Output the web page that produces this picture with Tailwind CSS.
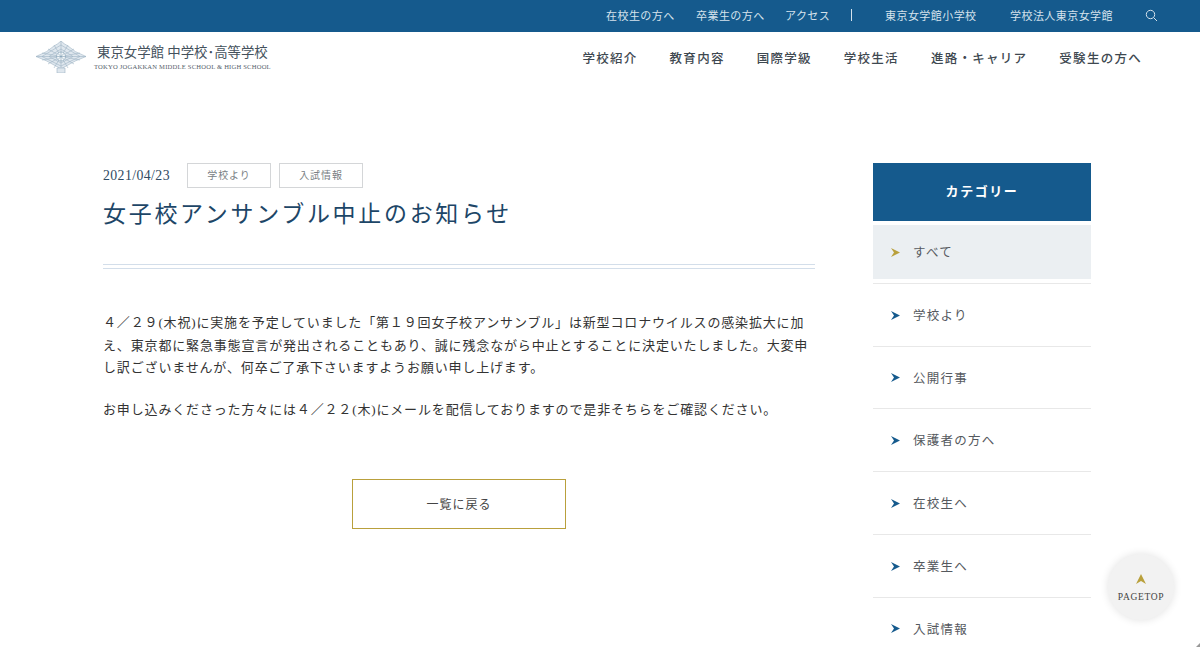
<!DOCTYPE html>
<html lang="ja">
<head>
    <meta charset="UTF-8">
    <title>女子校アンサンブル中止のお知らせ | 東京女学館</title>
    <script src="https://cdn.jsdelivr.net/npm/@tailwindcss/browser@4"></script>
</head>
<body class="bg-white">
<div class="relative h-[647px] overflow-hidden font-['Liberation_Serif','Noto_Sans_CJK_JP',serif]">
    <!-- Top bar -->
    <div class="h-[32px] bg-[#155a8d] flex items-center text-[11px] tracking-[0.04em] text-[#d5e2ec]">
        <a class="ml-[606px] w-[90px]">在校生の方へ</a>
        <a class="w-[89px]">卒業生の方へ</a>
        <a class="w-[66px]">アクセス</a>
        <span class="w-px h-[12px] bg-[#d5e2ec] mb-[2px]"></span>
        <a class="ml-[33px] w-[125px]">東京女学館小学校</a>
        <a class="w-[135px]">学校法人東京女学館</a>
        <svg class="w-[13px] h-[13px] -mt-[2px]" viewBox="0 0 13 13" fill="none" stroke="#d5e2ec" stroke-width="1"><circle cx="5.5" cy="5.5" r="4.2"/><path d="M8.6 8.6L12 12"/></svg>
    </div>

    <!-- Header -->
    <header class="h-[52px] flex items-center">
        <div class="ml-[36px] flex items-center">
            <svg class="w-[50px] h-[32px] mt-[-2px]" viewBox="0 0 50 32" fill="none" stroke="#9db4c5" stroke-width="0.6">
                <path d="M0 15.5Q12 11 18 5Q22 3 25 0Q28 3 32 5Q38 11 50 15.5Q38 20 32 24Q28 26 25 28Q22 26 18 24Q12 20 0 15.5Z" fill="#dfe7ee"/>
                <path d="M6 15.5L25 4L44 15.5L25 25Z"/>
                <path d="M13 15.5L25 8L37 15.5L25 22Z"/>
                <path d="M0 15.5H50M25 0V32M12 8L38 23M38 8L12 23M6 12L44 19M44 12L6 19M18 4L32 27M32 4L18 27"/>
                <circle cx="25" cy="15.5" r="4.5" fill="#f4f7f9" stroke="#7f9db3"/>
                <path d="M20.5 15.5H29.5M25 11V20M22 12.5L28 18.5M28 12.5L22 18.5" stroke="#7f9db3"/>
                <path d="M21 27H29V32H21Z" fill="#dfe7ee"/>
            </svg>
            <div class="ml-[8px] -mt-[3px]">
                <p class="ml-[3px] text-[13.4px] leading-[20px] text-[#44515c] whitespace-nowrap">東京女学館 中学校･高等学校</p>
                <p class="text-[6.6px] leading-[8px] tracking-[0.03em] text-[#55606a] whitespace-nowrap">TOKYO JOGAKKAN MIDDLE SCHOOL &amp; HIGH SCHOOL</p>
            </div>
        </div>
        <nav class="ml-auto mr-[58px] pt-[3px] flex items-center gap-[32px] text-[12.5px] font-medium tracking-[0.102em] text-[#3e4850] whitespace-nowrap">
            <a>学校紹介</a>
            <a>教育内容</a>
            <a>国際学級</a>
            <a>学校生活</a>
            <a>進路・キャリア</a>
            <a>受験生の方へ</a>
        </nav>
    </header>

    <!-- Main -->
    <main class="pt-[79px] pl-[103px] flex items-start">
        <article class="w-[712px]">
            <div class="flex items-center h-[25px]">
                <span class="w-[84px] pt-[2px] text-[13.8px] tracking-[0.03em] text-[#2f4a62]">2021/04/23</span>
                <span class="w-[84px] h-[25px] border border-[#d4d6d8] flex items-center justify-center text-[10px] tracking-[0.09em] text-[#7a7f84]">学校より</span>
                <span class="ml-[8px] w-[84px] h-[25px] border border-[#d4d6d8] flex items-center justify-center text-[10px] tracking-[0.09em] text-[#7a7f84]">入試情報</span>
            </div>
            <h1 class="mt-[11px] text-[23px] leading-[32px] tracking-[0.117em] text-[#1d4667] whitespace-nowrap">女子校アンサンブル中止のお知らせ</h1>
            <div class="mt-[33px] h-[5px] border-y border-[#d3deea]"></div>
            <div class="mt-[43px] text-[13px] leading-[22.5px] tracking-[0.065em] text-[#333]">
                <p>４／２９(木祝)に実施を予定していました「第１９回女子校アンサンブル」は新型コロナウイルスの感染拡大に加え、東京都に緊急事態宣言が発出されることもあり、誠に残念ながら中止とすることに決定いたしました。大変申し訳ございませんが、何卒ご了承下さいますようお願い申し上げます。</p>
                <p class="mt-[19.5px]">お申し込みくださった方々には４／２２(木)にメールを配信しておりますので是非そちらをご確認ください。</p>
            </div>
            <a class="mt-[57px] mx-auto w-[214px] h-[50px] pt-[2px] border border-[#b9a03c] flex items-center justify-center text-[12px] tracking-[0.08em] text-[#444]">一覧に戻る</a>
        </article>

        <!-- Sidebar -->
        <aside class="ml-[58px] w-[218px]">
            <h2 class="h-[58px] bg-[#155a8d] flex items-center justify-center text-[13px] font-bold tracking-[0.12em] text-white">カテゴリー</h2>
            <ul class="text-[12.5px] tracking-[0.1em] text-[#55595e]">
                <li class="h-[62.75px] pt-[4px] border-b border-[#e8e8e8]">
                    <a class="h-[54px] bg-[#ebeff2] flex items-center pl-[18px] gap-[13px]">
                        <svg class="w-[9px] h-[9px]" viewBox="0 0 9 9" fill="#b9a03c"><path d="M0 0L9 4.5L0 9L3 4.5Z"/></svg><span class="pt-[2px]">すべて</span>
                    </a>
                </li>
                <li class="h-[62.75px] pt-[1px] border-b border-[#e8e8e8] flex items-center pl-[18px] gap-[13px]">
                    <svg class="w-[9px] h-[9px]" viewBox="0 0 9 9" fill="#155a8d"><path d="M0 0L9 4.5L0 9L3 4.5Z"/></svg><span class="pt-[2px]">学校より</span>
                </li>
                <li class="h-[62.75px] pt-[1px] border-b border-[#e8e8e8] flex items-center pl-[18px] gap-[13px]">
                    <svg class="w-[9px] h-[9px]" viewBox="0 0 9 9" fill="#155a8d"><path d="M0 0L9 4.5L0 9L3 4.5Z"/></svg><span class="pt-[2px]">公開行事</span>
                </li>
                <li class="h-[62.75px] pt-[1px] border-b border-[#e8e8e8] flex items-center pl-[18px] gap-[13px]">
                    <svg class="w-[9px] h-[9px]" viewBox="0 0 9 9" fill="#155a8d"><path d="M0 0L9 4.5L0 9L3 4.5Z"/></svg><span class="pt-[2px]">保護者の方へ</span>
                </li>
                <li class="h-[62.75px] pt-[1px] border-b border-[#e8e8e8] flex items-center pl-[18px] gap-[13px]">
                    <svg class="w-[9px] h-[9px]" viewBox="0 0 9 9" fill="#155a8d"><path d="M0 0L9 4.5L0 9L3 4.5Z"/></svg><span class="pt-[2px]">在校生へ</span>
                </li>
                <li class="h-[62.75px] pt-[1px] border-b border-[#e8e8e8] flex items-center pl-[18px] gap-[13px]">
                    <svg class="w-[9px] h-[9px]" viewBox="0 0 9 9" fill="#155a8d"><path d="M0 0L9 4.5L0 9L3 4.5Z"/></svg><span class="pt-[2px]">卒業生へ</span>
                </li>
                <li class="h-[62.75px] pt-[1px] border-b border-[#e8e8e8] flex items-center pl-[18px] gap-[13px]">
                    <svg class="w-[9px] h-[9px]" viewBox="0 0 9 9" fill="#155a8d"><path d="M0 0L9 4.5L0 9L3 4.5Z"/></svg><span class="pt-[2px]">入試情報</span>
                </li>
            </ul>
        </aside>
    </main>

    <!-- Page top -->
    <a class="absolute left-[1108px] top-[554px] w-[66px] h-[66px] pt-[4px] rounded-full bg-[#f2f2f2] shadow-[0_0_8px_rgba(0,0,0,0.12)] flex flex-col items-center justify-center">
        <svg class="w-[10px] h-[10px] -mt-[1px]" viewBox="0 0 10 10" fill="#b9a03c"><path d="M5 0L10 10L5 7L0 10Z"/></svg>
        <span class="mt-[7px] text-[9.5px] leading-[12px] font-medium tracking-[0.07em] text-[#444]">PAGETOP</span>
    </a>
    <svg class="absolute right-0 bottom-0 w-[4px] h-[4px]" viewBox="0 0 4 4" fill="#999"><path d="M4 0V4H0Z"/></svg>
</div>
</body>
</html>
